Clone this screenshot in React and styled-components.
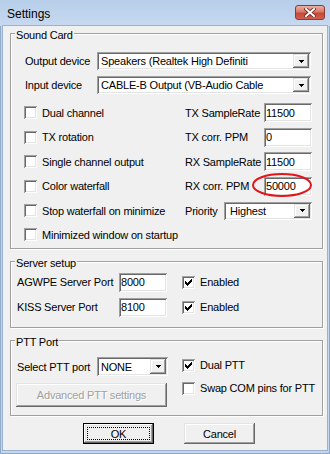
import React from 'react';
import styled, { createGlobalStyle } from 'styled-components';

const Global = createGlobalStyle`
  html, body { margin: 0; padding: 0; background: #fff; }
  body {
    font-family: "Liberation Sans", Arial, sans-serif;
    font-size: 11px;
    letter-spacing: -0.2px;
    color: #000;
  }
  * { box-sizing: border-box; }
`;

const sunken = `
  box-shadow: inset 1px 1px #a0a0a0, inset -1px -1px #ffffff,
    inset 2px 2px #696969, inset -2px -2px #e3e3e3;
`;
const raised = `
  box-shadow: inset -1px -1px #696969, inset 1px 1px #e3e3e3,
    inset -2px -2px #a0a0a0, inset 2px 2px #ffffff;
`;

const Window = styled.div`
  width: 330px;
  height: 454px;
  display: flex;
  flex-direction: column;
  background: #c2d6ee;
  box-shadow: inset 0 0 0 1px #8fa9c9;
  overflow: hidden;
`;

const TitleBar = styled.div`
  height: 26px;
  flex: none;
  display: flex;
  align-items: flex-start;
  justify-content: space-between;
  padding: 0 5px 0 7px;
  background: linear-gradient(#b7cee9, #c6d9f0);
`;

const Title = styled.div`
  font-size: 12px;
  letter-spacing: 0;
  line-height: 28px;
  color: #000;
`;

const CloseBtn = styled.div`
  margin-top: 5px;
  width: 30px;
  height: 15px;
  border: 1px solid #8a3b36;
  border-radius: 3px;
  background: linear-gradient(#eab0a2 0%, #d87a66 45%, #c4493b 55%, #cf5f4d 100%);
  display: flex;
  align-items: center;
  justify-content: center;
`;

const Client = styled.div`
  flex: 1;
  margin: 0 3px 4px 3px;
  background: #f0f0f0;
  box-shadow: 0 0 0 1px #9ab2cf;
  display: flex;
  flex-direction: column;
  padding-top: 7px;
`;

const Group = styled.div`
  position: relative;
  flex: none;
  height: ${p => p.$h}px;
  margin: ${p => p.$mt || 0}px 4px 0 7px;
  padding: ${p => p.$pt}px 10px 0 ${p => p.$pl}px;
  border: 1px solid #a0a0a0;
  box-shadow: inset 1px 1px #fff, 1px 1px #fff;
`;

const Legend = styled.div`
  position: absolute;
  top: -5px;
  left: 4px;
  padding: 0 1px;
  line-height: 13px;
  background: #f0f0f0;
`;

const DeviceRow = styled.div`
  height: 24px;
  display: flex;
  align-items: center;
`;

const Label = styled.div`
  flex: none;
  width: ${p => (p.$w ? `${p.$w}px` : 'auto')};
  padding-left: 1px;
  white-space: nowrap;
`;

const ComboBox = styled.div`
  flex: none;
  width: ${p => p.$w}px;
  height: ${p => p.$h}px;
  display: flex;
  padding: 2px;
  background: #fff;
  ${sunken}
`;

const ComboText = styled.div`
  flex: 1;
  display: flex;
  align-items: center;
  padding-left: ${p => p.$pad}px;
  white-space: nowrap;
  overflow: hidden;
`;

const DropBtn = styled.div`
  flex: none;
  width: 16px;
  height: 100%;
  background: #f0f0f0;
  display: flex;
  align-items: center;
  justify-content: center;
  ${raised}
`;

const CheckArea = styled.div`
  margin-top: 3.8px;
  display: flex;
`;

const LeftCol = styled.div`
  width: ${p => p.$w}px;
  flex: none;
  display: flex;
  flex-direction: column;
  gap: ${p => p.$gap || 0}px;
`;

const RightCol = styled.div`
  flex: 1;
  display: flex;
  flex-direction: column;
  margin-left: ${p => p.$ml || 0}px;
  margin-top: ${p => p.$mt || 0}px;
`;

const Row = styled.div`
  height: ${p => p.$h}px;
  display: flex;
  align-items: center;
  white-space: nowrap;
`;

const FieldLabel = styled.div`
  flex: 1;
  white-space: nowrap;
`;

const EditWrap = styled.div`
  position: relative;
  flex: none;
`;

const Edit = styled.div`
  width: ${p => p.$w}px;
  height: 19px;
  background: #fff;
  display: flex;
  align-items: center;
  padding-left: 2px;
  ${sunken}
`;

const Ellipse = styled.svg`
  position: absolute;
  left: -12px;
  top: -4px;
  width: 60px;
  height: 24px;
  pointer-events: none;
  overflow: visible;
`;

const Box = styled.span`
  flex: none;
  width: 13px;
  height: 13px;
  background: #fff;
  display: inline-block;
  ${sunken}
`;

const CheckText = styled.span`
  margin-left: 5px;
`;

const ServerRow = styled.div`
  height: 25px;
  display: flex;
  align-items: center;
`;

const CheckInline = styled.div`
  display: flex;
  align-items: center;
  margin-left: 15px;
`;

const PttLayout = styled.div`
  display: flex;
`;

const Button = styled.div`
  position: relative;
  flex: none;
  width: ${p => p.$w}px;
  height: ${p => p.$h}px;
  background: #f0f0f0;
  display: flex;
  align-items: center;
  justify-content: center;
  color: ${p => (p.$disabled ? '#a0a0a0' : '#000')};
  text-shadow: ${p => (p.$disabled ? '1px 1px #fff' : 'none')};
  ${p =>
    p.$default
      ? `border: 1px solid #000;
         box-shadow: inset -1px -1px #696969, inset 1px 1px #fff, inset -2px -2px #a0a0a0, inset 2px 2px #e3e3e3;`
      : raised}
`;

const Focus = styled.div`
  position: absolute;
  inset: 3px;
  border: 1px dotted #000;
`;

const ButtonRow = styled.div`
  margin-top: 7px;
  padding-left: 80px;
  display: flex;
  gap: 30px;
`;

const CheckMark = () => (
  <svg width="13" height="13" viewBox="0 0 13 13" shapeRendering="crispEdges" style={{ display: 'block' }}>
    <g fill="#000">
      <rect x="9" y="3" width="1" height="1" />
      <rect x="8" y="4" width="2" height="1" />
      <rect x="3" y="5" width="1" height="1" />
      <rect x="7" y="5" width="3" height="1" />
      <rect x="3" y="6" width="2" height="1" />
      <rect x="6" y="6" width="3" height="1" />
      <rect x="3" y="7" width="5" height="1" />
      <rect x="4" y="8" width="3" height="1" />
      <rect x="5" y="9" width="1" height="1" />
    </g>
  </svg>
);

const CheckBox = ({ checked }) => <Box>{checked && <CheckMark />}</Box>;

const Arrow = () => (
  <svg width="5" height="3" viewBox="0 0 5 3" shapeRendering="crispEdges">
    <rect x="0" y="0" width="5" height="1" fill="#000" />
    <rect x="1" y="1" width="3" height="1" fill="#000" />
    <rect x="2" y="2" width="1" height="1" fill="#000" />
  </svg>
);

const Combo = ({ w, h, text, pad = 2 }) => (
  <ComboBox $w={w} $h={h}>
    <ComboText $pad={pad}>{text}</ComboText>
    <DropBtn>
      <Arrow />
    </DropBtn>
  </ComboBox>
);

const CloseIcon = () => (
  <svg width="12" height="9" viewBox="0 0 12 9">
    <path d="M2 1 L10 8 M10 1 L2 8" stroke="#6b2520" strokeWidth="3.6" strokeLinecap="square" />
    <path d="M2 1 L10 8 M10 1 L2 8" stroke="#fff" strokeWidth="2" strokeLinecap="square" />
  </svg>
);

const checks = [
  'Dual channel',
  'TX rotation',
  'Single channel output',
  'Color waterfall',
  'Stop waterfall on minimize',
  'Minimized window on startup',
];

export default function App() {
  return (
    <>
      <Global />
      <Window>
        <TitleBar>
          <Title>Settings</Title>
          <CloseBtn>
            <CloseIcon />
          </CloseBtn>
        </TitleBar>
        <Client>
          <Group $h={216} $pt={15} $pl={13}>
            <Legend>Sound Card</Legend>
            <DeviceRow>
              <Label $w={73}>Output device</Label>
              <Combo w={214} h={18} text="Speakers (Realtek High Definiti" />
            </DeviceRow>
            <DeviceRow>
              <Label $w={73}>Input device</Label>
              <Combo w={214} h={18} text="CABLE-B Output (VB-Audio Cable" />
            </DeviceRow>
            <CheckArea>
              <LeftCol $w={161}>
                {checks.map(c => (
                  <Row key={c} $h={24.4}>
                    <CheckBox />
                    <CheckText>{c}</CheckText>
                  </Row>
                ))}
              </LeftCol>
              <RightCol>
                <Row $h={24.4}>
                  <FieldLabel>TX SampleRate</FieldLabel>
                  <EditWrap><Edit $w={48}>11500</Edit></EditWrap>
                </Row>
                <Row $h={24.4}>
                  <FieldLabel>TX corr. PPM</FieldLabel>
                  <EditWrap><Edit $w={48}>0</Edit></EditWrap>
                </Row>
                <Row $h={24.4}>
                  <FieldLabel>RX SampleRate</FieldLabel>
                  <EditWrap><Edit $w={48}>11500</Edit></EditWrap>
                </Row>
                <Row $h={24.4}>
                  <FieldLabel>RX corr. PPM</FieldLabel>
                  <EditWrap>
                    <Edit $w={48}>50000</Edit>
                    <Ellipse viewBox="0 0 60 24">
                      <ellipse cx="30" cy="12" rx="29" ry="11" fill="none" stroke="#e3151b" strokeWidth="2" />
                    </Ellipse>
                  </EditWrap>
                </Row>
                <Row $h={24.4}>
                  <FieldLabel>Priority</FieldLabel>
                  <Combo w={88} h={18} text="Highest" pad={4} />
                </Row>
              </RightCol>
            </CheckArea>
          </Group>

          <Group $h={67} $mt={12} $pt={7.5} $pl={5}>
            <Legend>Server setup</Legend>
            <ServerRow>
              <Label $w={103}>AGWPE Server Port</Label>
              <Edit $w={48}>8000</Edit>
              <CheckInline>
                <CheckBox checked />
                <CheckText>Enabled</CheckText>
              </CheckInline>
            </ServerRow>
            <ServerRow>
              <Label $w={103}>KISS Server Port</Label>
              <Edit $w={48}>8100</Edit>
              <CheckInline>
                <CheckBox checked />
                <CheckText>Enabled</CheckText>
              </CheckInline>
            </ServerRow>
          </Group>

          <Group $h={76} $mt={12} $pt={16} $pl={5}>
            <Legend>PTT Port</Legend>
            <PttLayout>
              <LeftCol $w={151} $gap={7}>
                <Row $h={19}>
                  <Label $w={81}>Select PTT port</Label>
                  <Combo w={71} h={19} text="NONE" />
                </Row>
                <Button $w={151} $h={24} $disabled>Advanced PTT settings</Button>
              </LeftCol>
              <RightCol $ml={15} $mt={-3.5}>
                <Row $h={23}>
                  <CheckBox checked />
                  <CheckText>Dual PTT</CheckText>
                </Row>
                <Row $h={23}>
                  <CheckBox />
                  <CheckText>Swap COM pins for PTT</CheckText>
                </Row>
              </RightCol>
            </PttLayout>
          </Group>

          <ButtonRow>
            <Button $w={71} $h={21} $default>
              OK
              <Focus />
            </Button>
            <Button $w={71} $h={21}>Cancel</Button>
          </ButtonRow>
        </Client>
      </Window>
    </>
  );
}
